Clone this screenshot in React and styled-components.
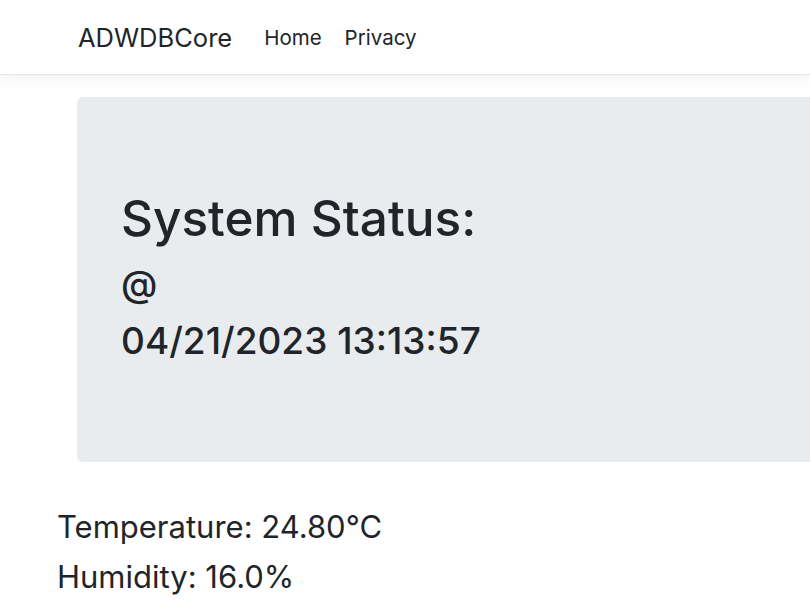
import styled, { createGlobalStyle } from "styled-components";

const GlobalStyle = createGlobalStyle`
  body {
    margin: 0;
    background: #fff;
    color: #212529;
    font-family: Inter, "Liberation Sans", sans-serif;
    overflow: hidden;
  }
`;

const Navbar = styled.header`
  height: 75px;
  display: flex;
  align-items: center;
  padding-left: 78px;
  border-bottom: 1px solid #e5e5e5;
  box-shadow: 0 4px 12px rgba(0, 0, 0, 0.05);
  box-sizing: border-box;
`;

const Brand = styled.a`
  font-size: 25.5px;
  color: #212529;
  text-decoration: none;
  margin-right: 32px;
`;

const NavLinks = styled.nav`
  display: flex;
  gap: 23px;
`;

const NavLink = styled.a`
  font-size: 20.5px;
  color: #212529;
  text-decoration: none;
`;

const Main = styled.main`
  padding: 22px 0 0 57px;
`;

const Jumbotron = styled.section`
  margin-left: 20px;
  height: 365px;
  background: #e9ecef;
  border-radius: 6px 0 0 6px;
  padding: 92px 0 0 44px;
  box-sizing: border-box;
`;

const Title = styled.h1`
  margin: 0 0 7px;
  font-size: 49.5px;
  font-weight: 500;
  line-height: 1.2;
`;

const SubLine = styled.div`
  font-size: 37px;
  font-weight: 500;
  line-height: 57px;
`;

const Readings = styled.div`
  margin-top: 40px;
`;

const Reading = styled.p`
  margin: 0;
  font-size: 31px;
  line-height: 50px;
`;

const App = () => {
  return (
    <>
      <GlobalStyle />
      <Navbar>
        <Brand href="#">ADWDBCore</Brand>
        <NavLinks>
          <NavLink href="#">Home</NavLink>
          <NavLink href="#">Privacy</NavLink>
        </NavLinks>
      </Navbar>
      <Main>
        <Jumbotron>
          <Title>System Status:</Title>
          <SubLine>@</SubLine>
          <SubLine>04/21/2023 13:13:57</SubLine>
        </Jumbotron>
        <Readings>
          <Reading>Temperature: 24.80°C</Reading>
          <Reading>Humidity: 16.0%</Reading>
        </Readings>
      </Main>
    </>
  );
};

export default App;
